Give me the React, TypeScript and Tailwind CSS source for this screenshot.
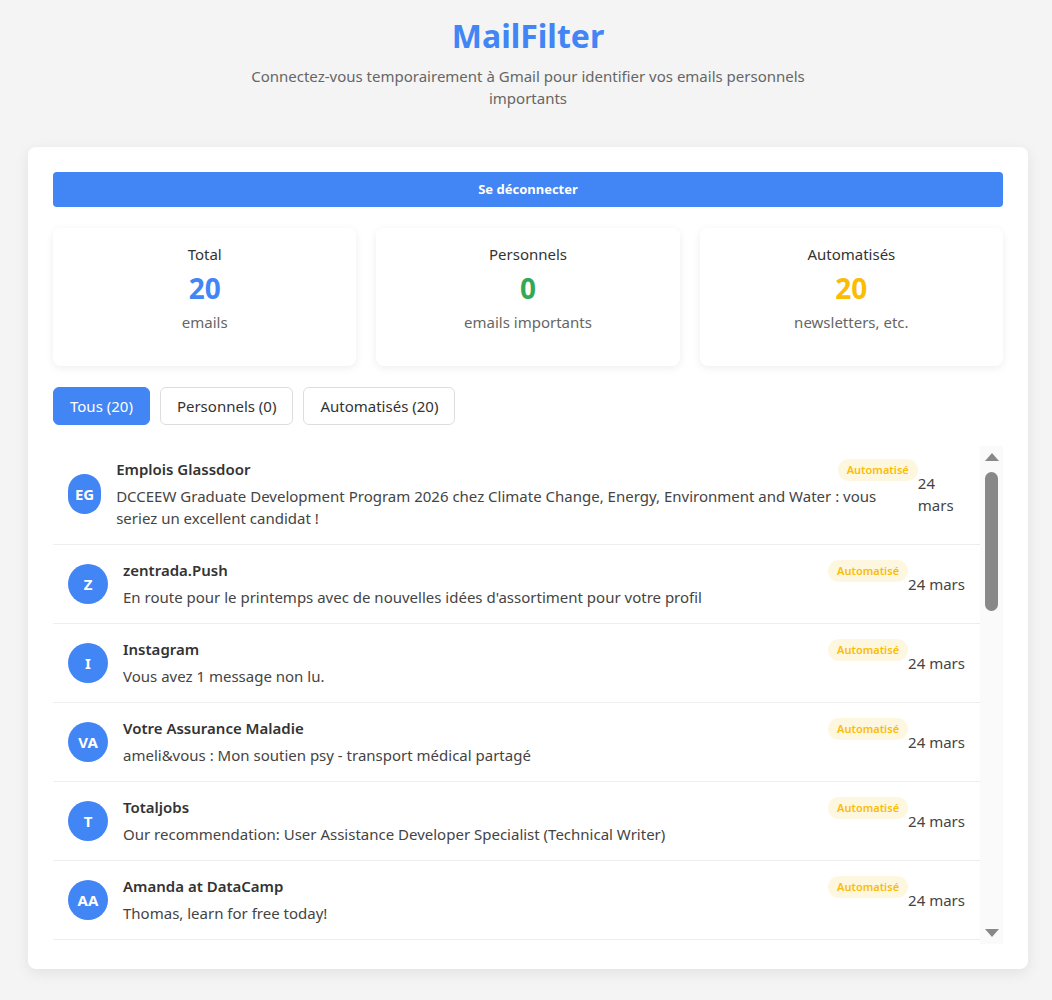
import { useState } from 'react';

type Email = {
  from: string;
  subject: string;
  date: string;
};

const emails: Email[] = [
  {
    from: 'Emplois Glassdoor',
    subject:
      'DCCEEW Graduate Development Program 2026 chez Climate Change, Energy, Environment and Water : vous seriez un excellent candidat !',
    date: '24 mars',
  },
  { from: 'zentrada.Push', subject: "En route pour le printemps avec de nouvelles idées d'assortiment pour votre profil", date: '24 mars' },
  { from: 'Instagram', subject: 'Vous avez 1 message non lu.', date: '24 mars' },
  { from: 'Votre Assurance Maladie', subject: 'ameli&vous : Mon soutien psy - transport médical partagé', date: '24 mars' },
  { from: 'Totaljobs', subject: 'Our recommendation: User Assistance Developer Specialist (Technical Writer)', date: '24 mars' },
  { from: 'Amanda at DataCamp', subject: 'Thomas, learn for free today!', date: '24 mars' },
  { from: 'LinkedIn', subject: 'Thomas, vous avez 3 nouvelles invitations', date: '24 mars' },
  { from: 'Medium Daily Digest', subject: 'The tools every technical writer should know', date: '24 mars' },
  { from: 'Indeed', subject: 'Nouveaux emplois correspondant à votre recherche', date: '23 mars' },
  { from: 'Spotify', subject: 'Votre mix de la semaine est prêt', date: '23 mars' },
  { from: 'Welcome to the Jungle', subject: 'Les offres de la semaine sélectionnées pour vous', date: '23 mars' },
  { from: 'Amazon.fr', subject: 'Votre commande a été expédiée', date: '23 mars' },
  { from: 'Duolingo', subject: 'Ne perdez pas votre série !', date: '23 mars' },
  { from: 'SNCF Connect', subject: 'Préparez vos prochains voyages au meilleur prix', date: '23 mars' },
  { from: 'Google', subject: 'Alerte de sécurité pour votre compte', date: '23 mars' },
  { from: 'Coursera', subject: 'Continue learning where you left off', date: '22 mars' },
  { from: 'Uber Eats', subject: 'Profitez de -20 % sur votre prochaine commande', date: '22 mars' },
  { from: 'Notion', subject: 'What’s new in Notion this month', date: '22 mars' },
  { from: 'Leboncoin', subject: 'De nouvelles annonces correspondent à votre recherche', date: '22 mars' },
  { from: 'Figma', subject: 'Your weekly design digest', date: '22 mars' },
];

function initials(name: string) {
  if (name === 'zentrada.Push') return 'Z';
  if (name === 'Amanda at DataCamp') return 'AA';
  return name
    .split(/\s+/)
    .slice(0, 2)
    .map((w) => w[0].toUpperCase())
    .join('');
}

function StatCard({ label, value, sub, color }: { label: string; value: number; sub: string; color: string }) {
  return (
    <div className="h-[138px] rounded-lg bg-white pt-[15px] flex flex-col items-center shadow-[0_2px_8px_rgba(0,0,0,0.07)]">
      <div className="text-[15px] leading-[22px] text-[#333]">{label}</div>
      <div className={`mt-[6px] text-[28px] leading-[34px] font-bold ${color}`}>{value}</div>
      <div className="mt-[6px] text-[15px] leading-[22px] text-[#666]">{sub}</div>
    </div>
  );
}

function EmailRow({ email }: { email: Email }) {
  return (
    <div className="flex items-center p-[15px] border-b border-[#eee]">
      <div className="w-10 h-10 mr-[15px] rounded-full bg-[#4285f4] text-white font-bold text-[15px] flex items-center justify-center">
        {initials(email.from)}
      </div>
      <div className="grow">
        <div className="h-[21px] flex items-center justify-between">
          <span className="text-[15px] leading-[21px] font-semibold text-[#333]">{email.from}</span>
          <span className="rounded-full bg-[#fef7e0] px-[9px] text-[11px] leading-[22px] font-semibold text-[#fbbc04]">
            Automatisé
          </span>
        </div>
        <div className="mt-[5px] text-[15px] leading-[22px] text-[#444]">{email.subject}</div>
      </div>
      <div className="text-[15px] leading-[22px] text-[#444]">{email.date}</div>
    </div>
  );
}

export default function App() {
  const [tab, setTab] = useState('all');

  const tabs = [
    { id: 'all', label: 'Tous (20)' },
    { id: 'perso', label: 'Personnels (0)' },
    { id: 'auto', label: 'Automatisés (20)' },
  ];

  return (
    <div className="min-h-screen bg-[#f4f4f4] pl-1 pt-[17px] pb-[30px] font-['Noto_Sans','Open_Sans',sans-serif] text-[#333]">
      <header className="text-center">
        <h1 className="text-[32px] leading-[38px] font-bold text-[#4285f4]">MailFilter</h1>
        <p className="mx-auto mt-[10px] max-w-[580px] text-[15px] leading-[22px] text-[#666]">
          Connectez-vous temporairement à Gmail pour identifier vos emails personnels importants
        </p>
      </header>

      <main className="mx-auto mt-[38px] w-[1000px] rounded-lg bg-white p-[25px] shadow-[0_4px_14px_rgba(0,0,0,0.08)]">
        <button className="w-full h-[35px] rounded bg-[#4285f4] text-white text-[13px] font-bold">Se déconnecter</button>

        <div className="mt-[21px] grid grid-cols-3 gap-5">
          <StatCard label="Total" value={20} sub="emails" color="text-[#4285f4]" />
          <StatCard label="Personnels" value={0} sub="emails importants" color="text-[#34a853]" />
          <StatCard label="Automatisés" value={20} sub="newsletters, etc." color="text-[#fbbc04]" />
        </div>

        <div className="mt-[21px] flex gap-[10px]">
          {tabs.map((t) => (
            <button
              key={t.id}
              onClick={() => setTab(t.id)}
              className={
                tab === t.id
                  ? 'h-[38px] px-4 rounded-md border border-[#4285f4] bg-[#4285f4] text-white text-[15px]'
                  : 'h-[38px] px-4 rounded-md border border-[#ddd] bg-white text-[#333] text-[15px]'
              }
            >
              {t.label}
            </button>
          ))}
        </div>

        <div className="mt-[19px] flex h-[500px]">
          <div className="flex-1 overflow-y-auto [scrollbar-width:none]">
            {emails.map((e, i) => (
              <EmailRow key={i} email={e} />
            ))}
          </div>
          {/* scrollbar */}
          <div className="self-end h-[498px] w-[23px] bg-[#fafafa] flex flex-col items-center">
            <div className="mt-[7px] w-0 h-0 border-x-[7px] border-x-transparent border-b-[8px] border-b-[#888]" />
            <div className="mt-[11px] w-[13px] h-[139px] rounded-full bg-[#888]" />
            <div className="flex-1" />
            <div className="mb-[7px] w-0 h-0 border-x-[7px] border-x-transparent border-t-[8px] border-t-[#888]" />
          </div>
        </div>
      </main>
    </div>
  );
}
